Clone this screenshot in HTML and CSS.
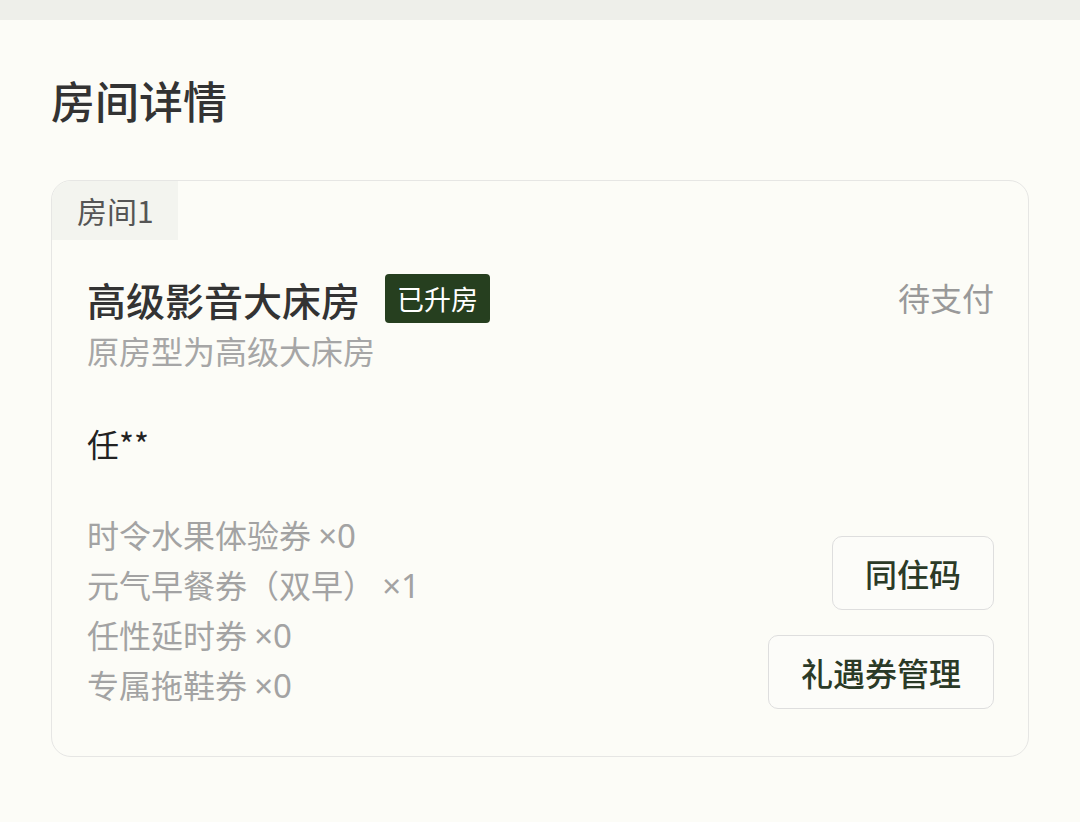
FILE: index.html
```html
<!DOCTYPE html>
<html lang="zh-CN">
<head>
  <meta charset="UTF-8">
  <meta name="viewport" content="width=device-width, initial-scale=1.0">
  <title>房间详情</title>
  <link rel="stylesheet" href="styles.css">
</head>
<body>
  <div class="topbar"></div>

  <div class="page">
    <h1 class="page-title">房间详情</h1>

    <!-- Room card -->
    <div class="room-card">
      <div class="room-tab">房间1</div>

      <div class="room-body">
        <div class="room-head">
          <span class="room-name">高级影音大床房</span>
          <span class="room-badge">已升房</span>
          <span class="room-status">待支付</span>
        </div>
        <p class="room-origin">原房型为高级大床房</p>

        <p class="guest-name">任**</p>

        <div class="room-foot">
          <ul class="coupon-list">
            <li>时令水果体验券 <span class="qty">×0</span></li>
            <li>元气早餐券（双早） <span class="qty">×1</span></li>
            <li>任性延时券 <span class="qty">×0</span></li>
            <li>专属拖鞋券 <span class="qty">×0</span></li>
          </ul>
          <div class="room-actions">
            <button class="action-btn">同住码</button>
            <button class="action-btn">礼遇券管理</button>
          </div>
        </div>
      </div>
    </div>
  </div>
</body>
</html>
```

FILE: styles.css
```css
body {
  margin: 0;
  background-color: #fcfcf7;
  color: #222;
  font-family: "Noto Sans CJK SC", "Noto Sans", sans-serif;
}

.topbar {
  height: 20px;
  background-color: #eeefea;
}

.page {
  padding: 50px 51px 0 51px;
}

.page-title {
  margin: 0 0 50px 0;
  font-size: 44px;
  font-weight: 500;
  line-height: 60px;
  color: #333;
}

.room-card {
  border: 1.5px solid #e6e6e4;
  border-radius: 20px;
  overflow: hidden;
}

.room-tab {
  width: 101px;
  height: 59px;
  padding-left: 25px;
  background-color: #f3f4ef;
  color: #555;
  font-size: 30px;
  line-height: 59px;
}

.room-body {
  padding: 34px 34px 47px 35px;
}

.room-head {
  display: flex;
  align-items: center;
  height: 49px;
}

.room-name {
  font-size: 39px;
  font-weight: 500;
  color: #333;
}

.room-badge {
  margin-left: 25px;
  padding: 0 12px;
  height: 49px;
  line-height: 49px;
  border-radius: 4px;
  background-color: #263f1f;
  color: #fff;
  font-size: 27px;
}

.room-status {
  margin-left: auto;
  margin-top: -4px;
  font-size: 32px;
  color: #999;
}

.room-origin {
  margin: 5px 0 0 0;
  font-size: 32px;
  line-height: 44px;
  color: #a6a6a6;
}

.guest-name {
  margin: 49px 0 0 0;
  font-size: 32px;
  line-height: 44px;
  color: #222;
}

.room-foot {
  display: flex;
  justify-content: space-between;
  align-items: flex-end;
  margin-top: 44px;
}

.coupon-list {
  list-style: none;
  margin: 0;
  padding: 0;
  font-size: 32px;
  line-height: 50px;
  color: #a3a3a3;
}

.coupon-list li {
  height: 50px;
}

.qty {
  font-family: "Noto Sans", sans-serif;
  font-size: 33px;
}

.room-actions {
  display: flex;
  flex-direction: column;
  align-items: flex-end;
  gap: 25px;
}

.action-btn {
  height: 74px;
  padding: 0 32px;
  border: 1.5px solid #dedede;
  border-radius: 10px;
  background-color: #fcfcf9;
  color: #2b3a27;
  font-family: inherit;
  font-size: 32px;
  font-weight: 500;
}
```
